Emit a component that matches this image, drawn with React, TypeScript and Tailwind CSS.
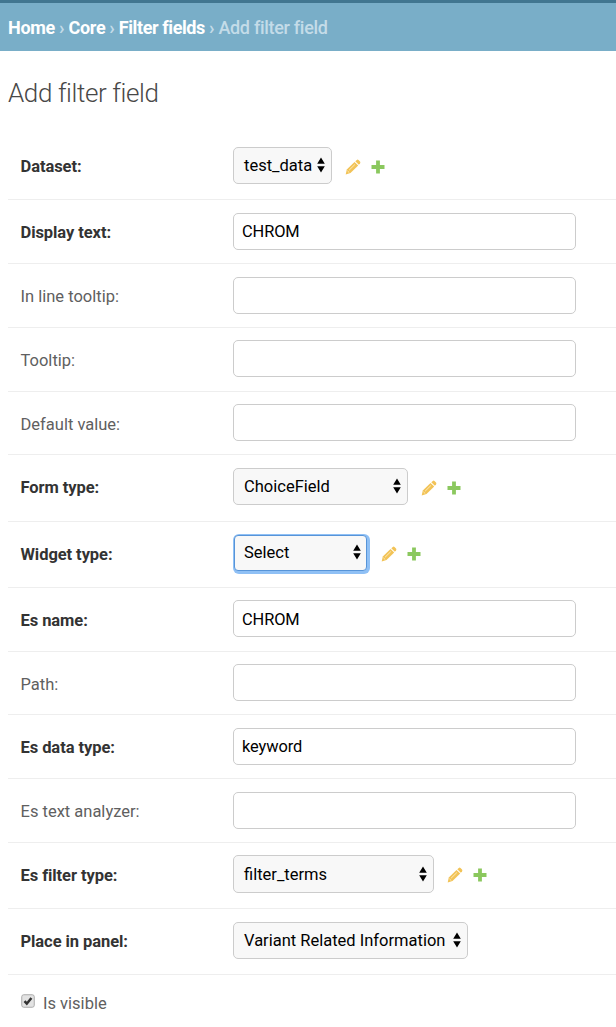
import React from "react";

type Row = {
  label: string;
  bold?: boolean;
  kind: "text" | "select";
  value?: string;
  row: string;
  size?: string;
  related?: boolean;
  focused?: boolean;
};

const rows: Row[] = [
  { label: "Dataset:", bold: true, kind: "select", value: "test_data", row: "h-[66px] pt-[13px]", size: "w-[99px] h-[37px]", related: true },
  { label: "Display text:", bold: true, kind: "text", value: "CHROM", row: "h-[64px] pt-[13px]" },
  { label: "In line tooltip:", kind: "text", row: "h-[64px] pt-[13px]" },
  { label: "Tooltip:", kind: "text", row: "h-[64px] pt-[12px]" },
  { label: "Default value:", kind: "text", row: "h-[63px] pt-[12px]" },
  { label: "Form type:", bold: true, kind: "select", value: "ChoiceField", row: "h-[67px] pt-[13px]", size: "w-[175px] h-[37px]", related: true },
  { label: "Widget type:", bold: true, kind: "select", value: "Select", row: "h-[66px] pt-[12px]", size: "w-[133px] h-[36px]", related: true, focused: true },
  { label: "Es name:", bold: true, kind: "text", value: "CHROM", row: "h-[64px] pt-[12px]" },
  { label: "Path:", kind: "text", row: "h-[63px] pt-[12px]" },
  { label: "Es data type:", bold: true, kind: "text", value: "keyword", row: "h-[64px] pt-[13px]" },
  { label: "Es text analyzer:", kind: "text", row: "h-[64px] pt-[13px]" },
  { label: "Es filter type:", bold: true, kind: "select", value: "filter_terms", row: "h-[66px] pt-[12px]", size: "w-[201px] h-[38px] pt-px", related: true },
  { label: "Place in panel:", bold: true, kind: "select", value: "Variant Related Information", row: "h-[66px] pt-[13px]", size: "w-[235px] h-[37px]" },
];

function Arrows() {
  return (
    <svg className="mb-[2px] h-4 w-2 shrink-0" viewBox="0 0 8 16" fill="#000">
      <path d="M4 .5 7.8 6.8H.2zM4 15.5.2 9.2h7.6z" />
    </svg>
  );
}

function Pencil() {
  return (
    <svg className="h-4 w-4" viewBox="0 0 16 16">
      <path d="M.7 15.4 1.8 10.4 9.5 3l3.7 3.6L5.5 14z" fill="#f2c357" />
      <path d="m10.3 2.2 1.5-1.3q.9-.6 1.7.1l1.5 1.5q.7.8.1 1.7L13.9 5.8z" fill="#f2c357" />
      <path d="m4.1 11.2 5.8-5.7M2.4 11.8l1.9 1.9" stroke="#fff3cf" strokeWidth=".8" fill="none" />
    </svg>
  );
}

function Plus() {
  return (
    <svg className="h-[14px] w-[14px]" viewBox="0 0 14 14" fill="#8bc85e">
      <path d="M5.1.5h3.8v4.6h4.6v3.8H8.9v4.6H5.1V8.9H.5V5.1h4.6z" />
    </svg>
  );
}

function SelectBox({ row }: { row: Row }) {
  const border = row.focused
    ? "mt-px mr-px ml-px rounded-[4px] border-[#5794d8] pr-[5px] pl-[9px] shadow-[1px_1px_0_2px_#8fc0f5]"
    : "rounded-[5px] border-[#ccc] pr-[6px] pl-[10px]";
  return (
    <button
      type="button"
      className={`flex shrink-0 items-center justify-between border bg-[#f8f8f8] text-[16.5px] whitespace-nowrap text-black ${border} ${row.size}`}
    >
      <span className={row.focused ? "" : "pt-px"}>{row.value}</span>
      <Arrows />
    </button>
  );
}

function FieldRow({ row }: { row: Row }) {
  return (
    <div className={`flex items-start border-b border-[#eee] pl-[12.5px] ${row.row}`}>
      <label
        className={`flex w-[212.5px] shrink-0 items-center text-[16.5px] ${row.row.includes("pt-[12px]") ? "h-[42px]" : "h-[40px]"} ${row.bold ? "font-bold tracking-[-0.07px] text-[#333]" : "text-[#606060]"}`}
      >
        {row.label}
      </label>
      {row.kind === "text" ? (
        <input
          type="text"
          defaultValue={row.value ?? ""}
          className={`h-[37px] w-[343px] rounded-[5px] border border-[#ccc] bg-white px-2 text-[16.4px] tracking-[-0.1px] text-black outline-none ${row.row.includes("pt-[12px]") ? "pt-[2px]" : ""}`}
        />
      ) : (
        <SelectBox row={row} />
      )}
      {row.related && (
        <div className="flex h-[39px] items-center gap-[10px] pl-[12.5px]">
          <Pencil />
          <Plus />
        </div>
      )}
    </div>
  );
}

export default function App() {
  return (
    <div className="h-[1027px] overflow-hidden bg-white font-['Roboto',sans-serif]">
      <nav className="flex h-[51px] items-center gap-[4px] border-t-[3px] border-[#417690] bg-[#79aec8] pt-px pl-2 text-[18px] whitespace-nowrap text-[#c4dce8]">
        <a className="font-bold tracking-[-0.3px] text-white">Home</a>
        <span className="font-bold">›</span>
        <a className="font-bold tracking-[-0.3px] text-white">Core</a>
        <span className="font-bold">›</span>
        <a className="font-bold tracking-[-0.4px] text-white">Filter fields</a>
        <span className="font-bold">›</span>
        <span className="font-medium tracking-[-0.3px]">Add filter field</span>
      </nav>
      <h1 className="flex h-[83px] items-center pt-[2px] pl-2 text-[26px] font-light tracking-[-0.4px] text-[#484848]">Add filter field</h1>
      <form className="pl-2">
        {rows.map((row) => (
          <FieldRow key={row.label} row={row} />
        ))}
        <div className="flex h-[52px] items-start pt-[19px] pl-[13px]">
          <svg className="h-[14px] w-[14px]" viewBox="0 0 14 14">
            <rect x=".75" y=".75" width="12.5" height="12.5" rx="2" fill="#e3e3e3" stroke="#aaa" />
            <path d="m3.5 7.2 2.3 2.5L10.4 4" fill="none" stroke="#333" strokeWidth="2.5" />
          </svg>
          <label className="pl-[8px] text-[16.5px] leading-[19px] text-[#606060]">Is visible</label>
        </div>
      </form>
    </div>
  );
}
